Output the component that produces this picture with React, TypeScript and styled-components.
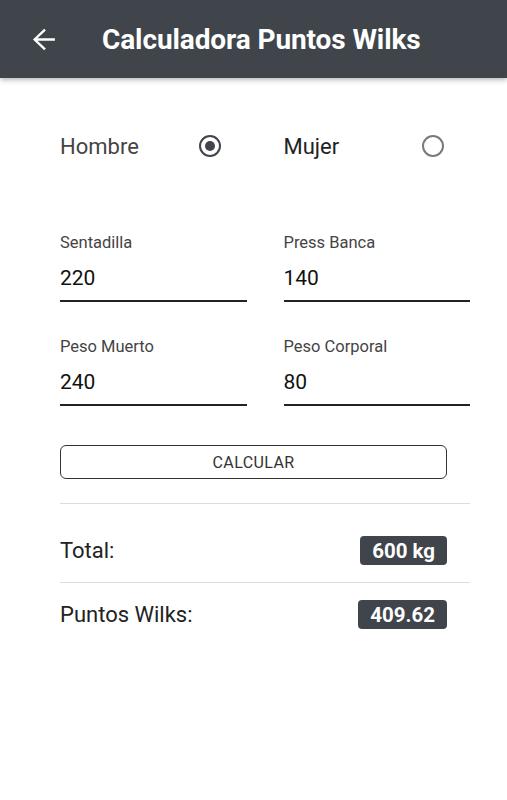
import React, { useState } from 'react';
import styled, { createGlobalStyle } from 'styled-components';

const GlobalStyle = createGlobalStyle`
  * {
    margin: 0;
    padding: 0;
    box-sizing: border-box;
  }
  body {
    background: #ffffff;
    font-family: Roboto, "Noto Sans", sans-serif;
    color: #222;
  }
`;

const dark = '#40454b';

const Header = styled.header`
  height: 78px;
  background: ${dark};
  display: flex;
  align-items: center;
  padding-left: 32px;
  gap: 45px;
  box-shadow: 0 2px 5px rgba(0, 0, 0, 0.28);
`;

const BackButton = styled.button`
  width: 25px;
  height: 25px;
  display: flex;
  align-items: center;
  justify-content: center;
  background: none;
  border: none;
  cursor: pointer;
`;

const Title = styled.h1`
  font-size: 28px;
  font-weight: 700;
  color: #ffffff;
  letter-spacing: -0.1px;
`;

const Content = styled.main`
  padding: 0 37px 0 60px;
`;

const Grid = styled.div<{ $top: number }>`
  display: grid;
  grid-template-columns: 1fr 1fr;
  column-gap: 37px;
  margin-top: ${(p) => p.$top}px;
`;

const RadioOption = styled.label`
  height: 44px;
  display: flex;
  align-items: center;
  justify-content: space-between;
  padding-right: 26px;
  cursor: pointer;
`;

const RadioText = styled.span<{ $checked: boolean }>`
  font-size: 22px;
  color: ${(p) => (p.$checked ? '#444' : '#222')};
`;

const RadioCircle = styled.span<{ $checked: boolean }>`
  width: 22px;
  height: 22px;
  border-radius: 50%;
  border: 2.5px solid ${(p) => (p.$checked ? dark : '#7a7a7a')};
  display: flex;
  align-items: center;
  justify-content: center;

  &::after {
    content: '';
    width: 10px;
    height: 10px;
    border-radius: 50%;
    background: ${dark};
    display: ${(p) => (p.$checked ? 'block' : 'none')};
  }
`;

const Field = styled.div`
  display: flex;
  flex-direction: column;
  margin-bottom: 36px;
`;

const FieldLabel = styled.span`
  font-size: 16.5px;
  line-height: 18px;
  color: #444;
`;

const FieldInput = styled.input`
  margin-top: 12px;
  font-family: inherit;
  font-size: 21px;
  line-height: 28px;
  height: 38px;
  padding-bottom: 8px;
  color: #111;
  border: none;
  border-bottom: 2px solid #222;
  outline: none;
  background: transparent;
  width: 100%;
`;

const CalcButton = styled.button`
  margin-top: 3px;
  width: 387px;
  height: 34px;
  border: 1px solid #333;
  border-radius: 6px;
  background: #ffffff;
  font-family: inherit;
  font-size: 16px;
  font-weight: 400;
  color: #333;
  letter-spacing: 0.4px;
  cursor: pointer;
`;

const Divider = styled.hr<{ $top?: number }>`
  border: none;
  border-top: 1px solid #dcdcdc;
  margin-top: ${(p) => p.$top ?? 0}px;
`;

const ResultRow = styled.div<{ $top: number; $bottom: number }>`
  display: flex;
  align-items: center;
  justify-content: space-between;
  padding: ${(p) => p.$top}px 23px ${(p) => p.$bottom}px 0;
`;

const ResultLabel = styled.span`
  font-size: 22px;
  color: #222;
`;

const Badge = styled.span`
  height: 29px;
  padding: 0 12px;
  display: flex;
  align-items: center;
  background: ${dark};
  border-radius: 4px;
  color: #ffffff;
  font-size: 20.5px;
  font-weight: 700;
`;

const ArrowLeft = () => (
  <svg width="25" height="25" viewBox="0 0 24 24" fill="none">
    <path d="M22 12H2.5M12.5 2.5 2.5 12l10 9.5" stroke="#fff" strokeWidth="2.2" />
  </svg>
);

const App: React.FC = () => {
  const [sex, setSex] = useState<'h' | 'm'>('h');
  const [values, setValues] = useState({ squat: '220', bench: '140', dead: '240', body: '80' });

  const set = (k: keyof typeof values) => (e: React.ChangeEvent<HTMLInputElement>) =>
    setValues({ ...values, [k]: e.target.value });

  return (
    <>
      <GlobalStyle />
      <Header>
        <BackButton aria-label="Volver">
          <ArrowLeft />
        </BackButton>
        <Title>Calculadora Puntos Wilks</Title>
      </Header>
      <Content>
        <Grid $top={46}>
          <RadioOption onClick={() => setSex('h')}>
            <RadioText $checked={sex === 'h'}>Hombre</RadioText>
            <RadioCircle $checked={sex === 'h'} />
          </RadioOption>
          <RadioOption onClick={() => setSex('m')}>
            <RadioText $checked={sex === 'm'}>Mujer</RadioText>
            <RadioCircle $checked={sex === 'm'} />
          </RadioOption>
        </Grid>

        <Grid $top={66}>
          <Field>
            <FieldLabel>Sentadilla</FieldLabel>
            <FieldInput value={values.squat} onChange={set('squat')} />
          </Field>
          <Field>
            <FieldLabel>Press Banca</FieldLabel>
            <FieldInput value={values.bench} onChange={set('bench')} />
          </Field>
          <Field>
            <FieldLabel>Peso Muerto</FieldLabel>
            <FieldInput value={values.dead} onChange={set('dead')} />
          </Field>
          <Field>
            <FieldLabel>Peso Corporal</FieldLabel>
            <FieldInput value={values.body} onChange={set('body')} />
          </Field>
        </Grid>

        <CalcButton>CALCULAR</CalcButton>
        <Divider $top={24} />
        <ResultRow $top={32} $bottom={17}>
          <ResultLabel>Total:</ResultLabel>
          <Badge>600 kg</Badge>
        </ResultRow>
        <Divider />
        <ResultRow $top={17} $bottom={17}>
          <ResultLabel>Puntos Wilks:</ResultLabel>
          <Badge>409.62</Badge>
        </ResultRow>
      </Content>
    </>
  );
};

export default App;
